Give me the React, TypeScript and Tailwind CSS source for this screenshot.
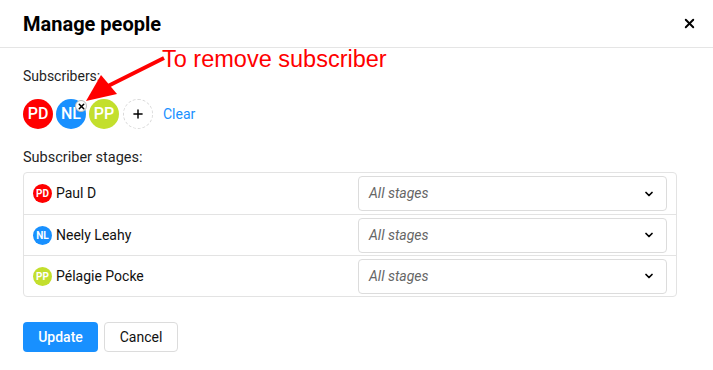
import { ChevronDown, Plus, X } from "lucide-react";

const people = [
  { initials: "PD", name: "Paul D", color: "bg-[#ff0000]" },
  { initials: "NL", name: "Neely Leahy", color: "bg-[#1890ff]" },
  { initials: "PP", name: "Pélagie Pocke", color: "bg-[#c3df2d]" },
];

function Annotation() {
  return (
    <div className="pointer-events-none absolute left-0 top-0">
      <span
        className="absolute left-[162px] top-[48px] whitespace-nowrap text-[23.5px] leading-none text-[#ff0000]"
        style={{ fontFamily: '"Liberation Sans", Arial, sans-serif' }}
      >
        To remove subscriber
      </span>
      <svg className="absolute left-0 top-0" width="200" height="120" viewBox="0 0 200 120">
        <line x1="164" y1="58" x2="104" y2="88" stroke="#ff0000" strokeWidth="4" />
        <polygon points="86,101 101,75 117,94" fill="#ff0000" />
      </svg>
    </div>
  );
}

export default function App() {
  return (
    <div
      className="relative h-[370px] w-[713px] overflow-hidden bg-white text-[#1f1f1f]"
      style={{ fontFamily: 'Roboto, "Noto Sans", sans-serif' }}
    >
      <div className="flex h-[48px] items-center justify-between border-b border-[#e5e5e5] pl-[23px] pr-[16px]">
        <h1 className="text-[20px] font-bold text-black">Manage people</h1>
        <X size={15} strokeWidth={3} className="text-black" />
      </div>

      <div className="pl-[23px] pr-[36px] pt-[18px]">
        <div className="text-[14px] leading-[20px]">Subscribers:</div>
        <div className="mt-[13px] flex items-center">
          {people.map((p, i) => (
            <div
              key={p.initials}
              className={`relative mr-[3px] flex h-[30px] w-[30px] items-center justify-center rounded-full text-[16px] font-medium text-white ${p.color}`}
            >
              {p.initials}
              {i === 1 && (
                <span className="absolute right-[-1px] top-[1px] flex h-[12px] w-[12px] items-center justify-center rounded-full border border-[#bbb] bg-white">
                  <X size={9} strokeWidth={4} className="text-black" />
                </span>
              )}
            </div>
          ))}
          <div className="ml-[1px] flex h-[30px] w-[30px] items-center justify-center rounded-full border border-dashed border-[#d9d9d9]">
            <Plus size={14} strokeWidth={2.5} className="text-black" />
          </div>
          <button className="ml-[10px] text-[14px] text-[#1890ff]">Clear</button>
        </div>

        <div className="mt-[19px] text-[14.5px] leading-[20px]">Subscriber stages:</div>
        <div className="mt-[4px] rounded-[4px] border border-[#e3e3e3]">
          {people.map((p, i) => (
            <div
              key={p.initials}
              className={`flex h-[41px] items-center ${i > 0 ? "border-t border-[#e3e3e3]" : ""}`}
            >
              <div className="flex flex-1 items-center pl-[9px]">
                <span
                  className={`flex h-[19px] w-[19px] items-center justify-center rounded-full text-[10px] font-bold text-white ${p.color}`}
                >
                  {p.initials}
                </span>
                <span className="ml-[4px] text-[14px] text-[#111]">{p.name}</span>
              </div>
              <div className="mr-[9px] flex h-[35px] w-[309px] items-center justify-between rounded-[4px] border border-[#dcdcdc] pl-[10px] pr-[11px]">
                <span className="text-[14px] italic text-[#666]">All stages</span>
                <ChevronDown size={12} strokeWidth={3.5} className="text-black" />
              </div>
            </div>
          ))}
        </div>

        <div className="mt-[25px] flex gap-[6px]">
          <button className="h-[30px] w-[75px] rounded-[4px] bg-[#1890ff] text-[14px] font-medium text-white">
            Update
          </button>
          <button className="h-[30px] w-[74px] rounded-[4px] border border-[#dcdcdc] bg-white text-[14px] text-[#111]">
            Cancel
          </button>
        </div>
      </div>

      <Annotation />
    </div>
  );
}
